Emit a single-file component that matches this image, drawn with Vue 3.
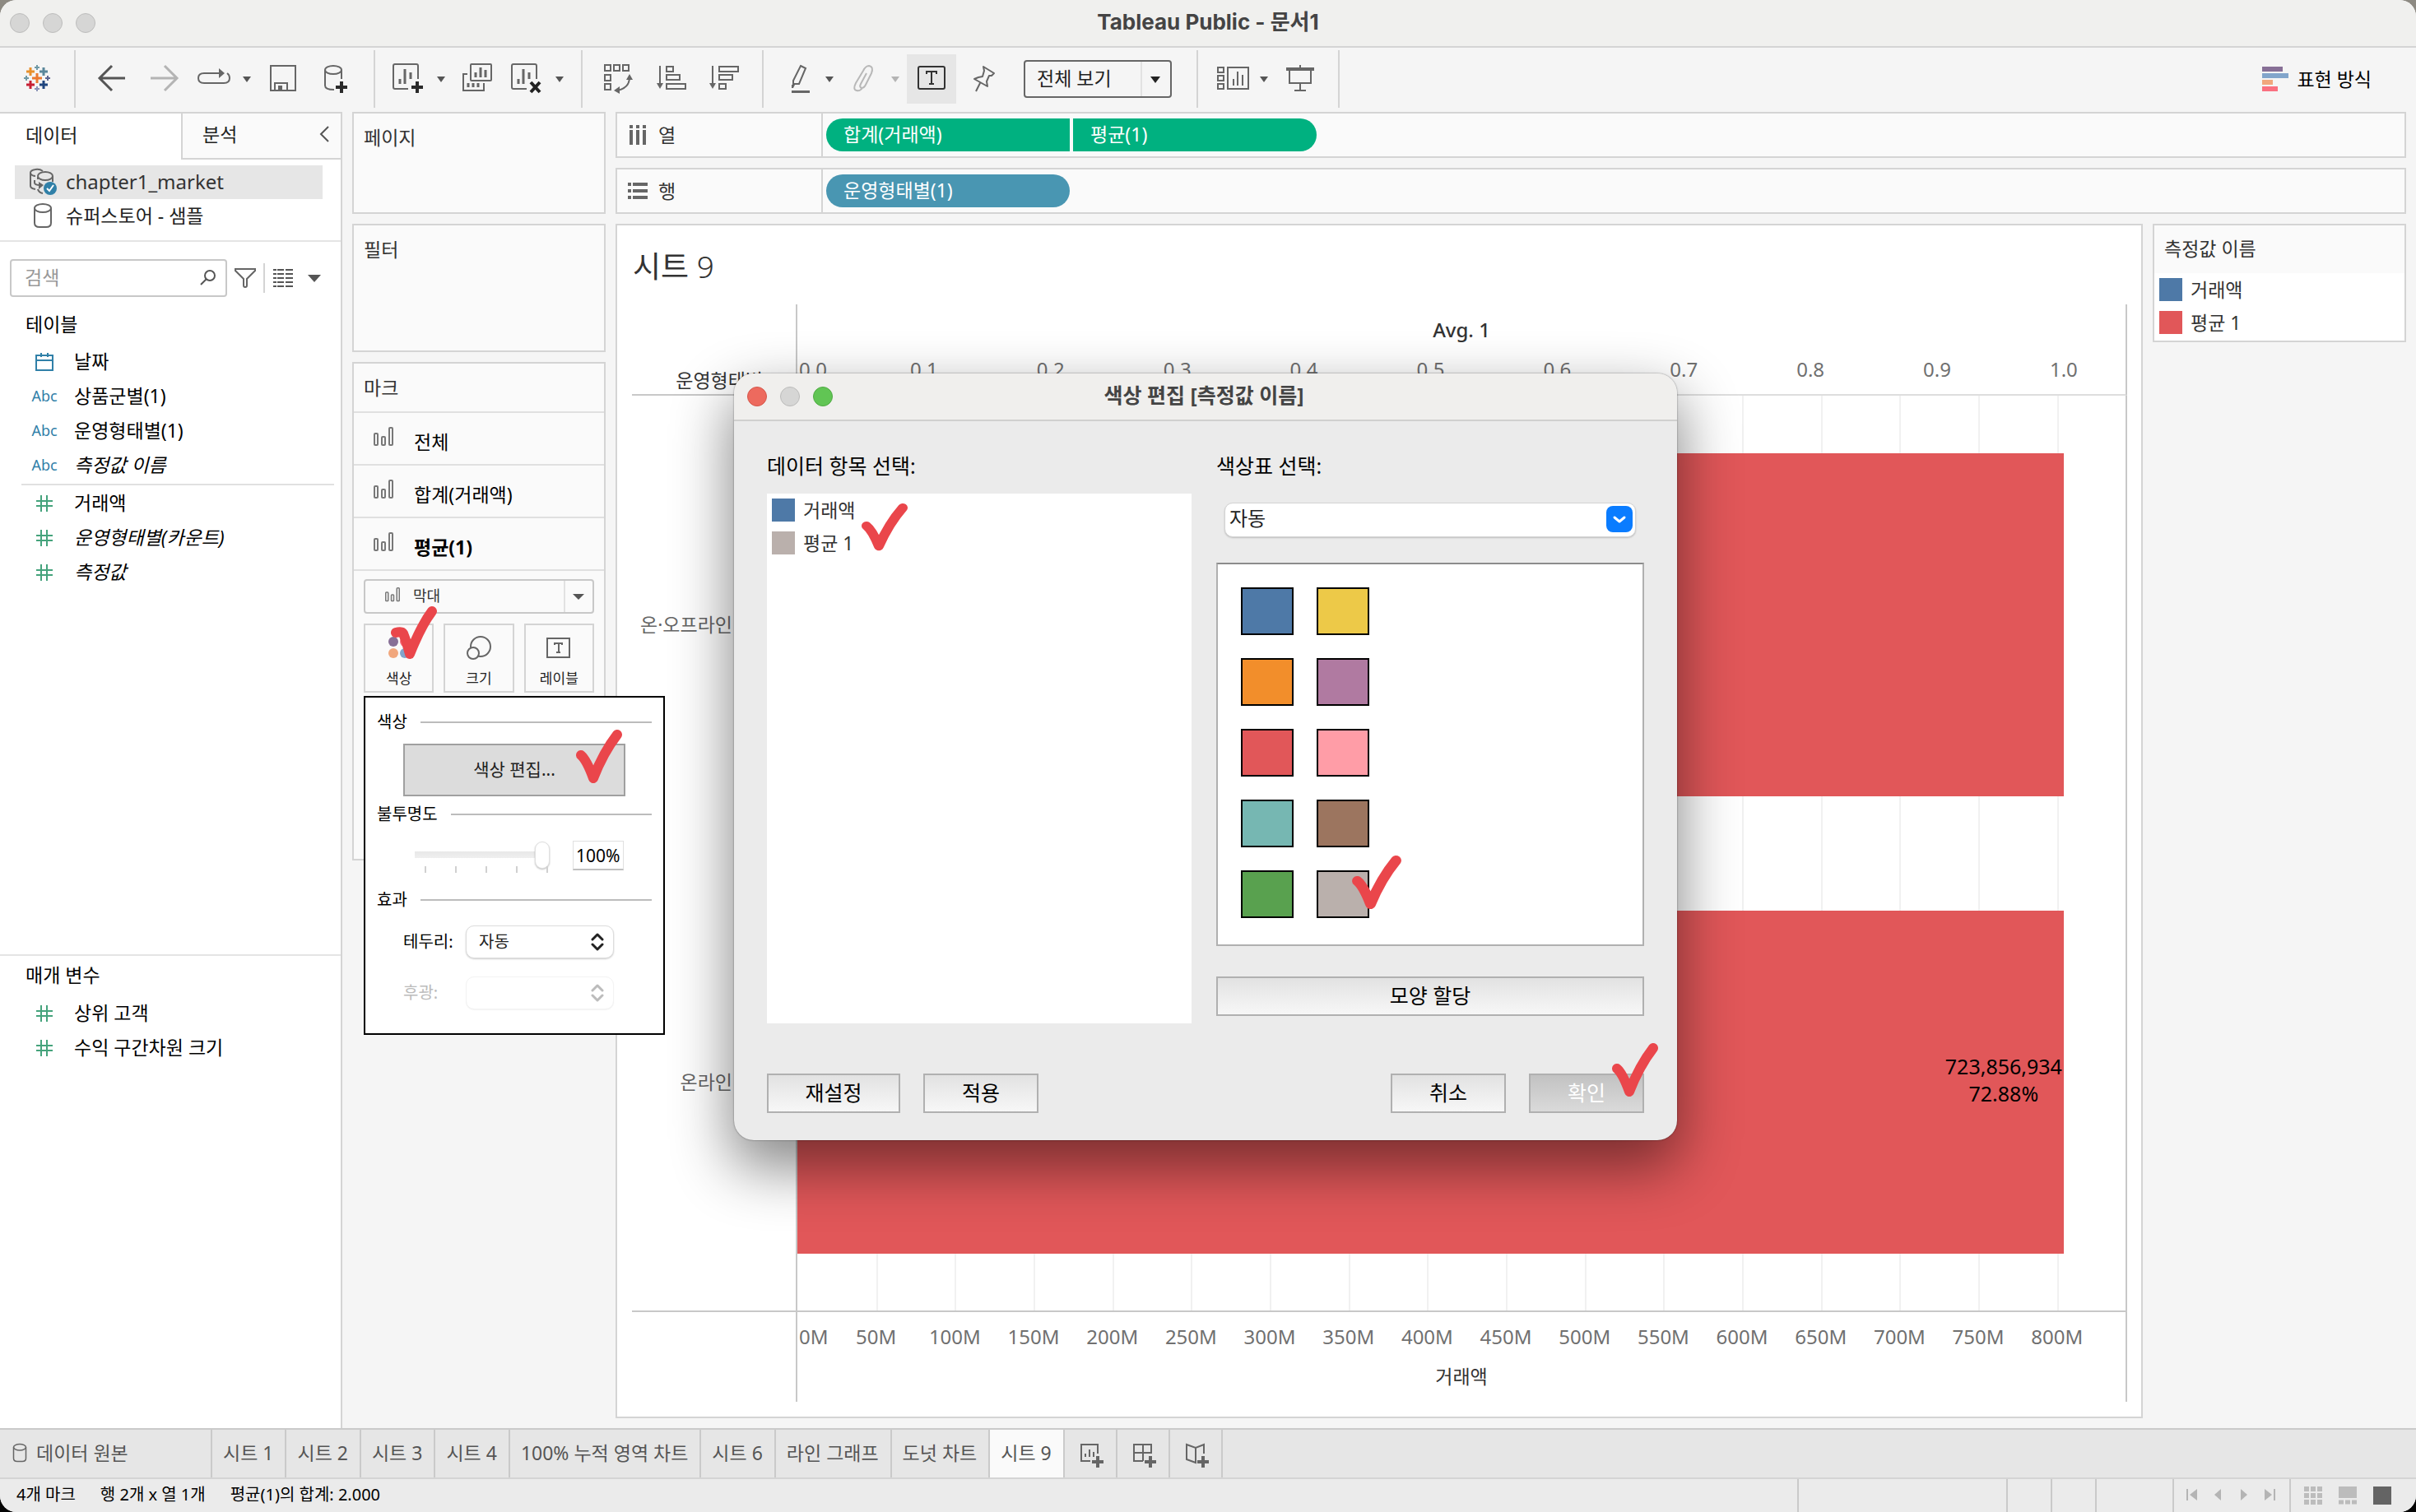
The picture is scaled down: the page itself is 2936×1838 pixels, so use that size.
<script setup>
import { ref } from 'vue'

const dimensions = [
  { icon: 'date', name: '날짜' },
  { icon: 'abc', name: '상품군별(1)' },
  { icon: 'abc', name: '운영형태별(1)' },
  { icon: 'abc', name: '측정값 이름', auto: true }
]
const measures = [
  { name: '거래액' },
  { name: '운영형태별(카운트)', auto: true },
  { name: '측정값', auto: true }
]
const parameters = ['상위 고객', '수익 구간차원 크기']

const markLayers = [
  { name: '전체' },
  { name: '합계(거래액)' },
  { name: '평균(1)', active: true }
]

const avgMax = 1.0488
const salesMax = 843.5
const avgTicks = Array.from({ length: 10 }, (_, i) => (i + 1) / 10)
const salesTicks = Array.from({ length: 16 }, (_, i) => (i + 1) * 50)
const avgPos = (v) => ({ left: (v / avgMax) * 100 + '%' })
const salesPos = (v) => ({ left: (v / salesMax) * 100 + '%' })
const panes = [
  { name: '온·오프라인', value: 1 },
  { name: '온라인', value: 1, labels: ['723,856,934', '72.88%'] }
]

const palette = [
  '#4e79a7', '#edc948', '#f28e2b', '#b07aa1', '#e15759',
  '#ff9da7', '#76b7b2', '#9c755f', '#59a14f', '#bab0ac'
]
const sheets = ['시트 1', '시트 2', '시트 3', '시트 4', '100% 누적 영역 차트', '시트 6', '라인 그래프', '도넛 차트', '시트 9']
const activeSheet = ref('시트 9')
const search = ref('')
const opacity = ref(100)
</script>

<template>
  <div class="window">
    <svg class="defs" aria-hidden="true">
      <symbol id="check" viewBox="0 0 58 68" preserveAspectRatio="none">
        <path d="M7 32Q14 38 22 60Q34 29 51 7" fill="none" stroke="#ea464b" stroke-width="12" stroke-linecap="round" stroke-linejoin="round" />
      </symbol>
      <symbol id="check-wide" viewBox="0 0 58 68">
        <path d="M7 33Q14 31 16 34Q20 44 24 59Q38 24 51 7" fill="none" stroke="#ea464b" stroke-width="12" stroke-linecap="round" stroke-linejoin="round" />
      </symbol>
      <symbol id="bars" viewBox="0 0 24 24">
        <g fill="none" stroke="#787878" stroke-width="2">
          <rect x="1" y="8" width="4" height="14" rx="1" /><rect x="10" y="12" width="4" height="10" rx="1" /><rect x="19" y="1" width="4" height="21" rx="1" />
        </g>
      </symbol>
      <symbol id="hash" viewBox="0 0 24 24">
        <path d="M8 2V22M15 2V22M2 9H22M2 15H22" stroke="#45a37c" stroke-width="2" fill="none" />
      </symbol>
      <symbol id="cylinder" viewBox="0 0 24 32">
        <g fill="none" stroke="#666" stroke-width="2"><ellipse cx="12" cy="7" rx="10" ry="5" /><path d="M2 7V25Q2 30 8 30H16Q22 30 22 25V7" /></g>
      </symbol>
      <symbol id="spin" viewBox="0 0 16 24">
        <path d="M2 9L8 3L14 9M2 15L8 21L14 15" fill="none" stroke="currentColor" stroke-width="3" stroke-linecap="round" stroke-linejoin="round" />
      </symbol>
      <symbol id="sheet" viewBox="0 0 40 40">
        <path d="M32 20V4Q32 2 30 2H4Q2 2 2 4V30Q2 32 4 32H20" fill="none" stroke="#666" stroke-width="2" />
        <path d="M10 20V26M16 8V26M23 12V20" stroke="#666" stroke-width="3" />
      </symbol>
    </svg>

    <header class="titlebar">
      <div class="lights"><i></i><i></i><i></i></div>
      <h1>Tableau Public - 문서1</h1>
    </header>

    <nav class="toolbar" aria-label="도구 모음">
      <div class="group logo">
        <button class="ic" aria-label="시작 페이지">
          <svg viewBox="0 0 40 40" fill="none" stroke-width="2">
            <path d="M20 13V25M14 19H26" stroke="#eb7a30" stroke-width="3" />
            <path d="M12 6V16M7 11H17" stroke="#e8912d" stroke-width="3" /><path d="M28 6V16M23 11H33" stroke="#5b879b" stroke-width="3" />
            <path d="M12 22V32M7 27H17" stroke="#c72035" stroke-width="3" /><path d="M28 22V32M23 27H33" stroke="#1f457e" stroke-width="3" />
            <path d="M20 3V9M17 6H23M7 16V22M4 19H10" stroke="#7099a6" /><path d="M33 16V22M30 19H36" stroke="#5b6591" /><path d="M20 29V35M17 32H23" stroke="#8b93b8" />
          </svg>
        </button>
      </div>
      <div class="group">
        <button class="ic" aria-label="실행 취소"><svg viewBox="0 0 40 40"><path d="M36 19H5M20 4L5 19L20 34" fill="none" stroke="#555" stroke-width="3" /></svg></button>
        <button class="ic" aria-label="다시 실행"><svg viewBox="0 0 40 40"><path d="M3 19H35M20 4L35 19L20 34" fill="none" stroke="#b4b4b4" stroke-width="3" /></svg></button>
        <button class="ic split" aria-label="다시 재생"><svg viewBox="0 0 40 40"><path d="M30 13H8Q1 13 1 19Q1 25 8 25H32Q39 25 39 19Q39 15 36 13" fill="none" stroke="#666" stroke-width="2" /><path d="M26 7L33 13L26 19Z" fill="#666" /></svg></button>
        <button class="caret" aria-label="재생 옵션"></button>
        <button class="ic" aria-label="저장"><svg viewBox="0 0 40 40"><path d="M5 4H35V34H5ZM10 34V25H25V34" fill="none" stroke="#666" stroke-width="2" /><path d="M14 28H19V34H14Z" fill="#666" /></svg></button>
        <button class="ic" aria-label="새 데이터 원본"><svg viewBox="0 0 40 40"><g fill="none" stroke="#666" stroke-width="2"><ellipse cx="17" cy="9" rx="10" ry="5" /><path d="M27 9V20M7 9V28Q7 33 18 33" /></g><path d="M27 23V37M20 30H34" stroke="#2a2a2a" stroke-width="4" /></svg></button>
      </div>
      <div class="group">
        <button class="ic split" aria-label="새 워크시트"><svg viewBox="0 0 40 40"><use href="#sheet" /><path d="M31 23V37M24 30H38" stroke="#2a2a2a" stroke-width="4" /></svg></button>
        <button class="caret" aria-label="새 워크시트 옵션"></button>
        <button class="ic" aria-label="복제"><svg viewBox="0 0 40 40"><g fill="none" stroke="#666" stroke-width="2"><rect x="12" y="2" width="25" height="20" rx="1" /><path d="M8 14H3V34H28V25" /></g><path d="M18 12V18M24 6V18M30 9V18M9 25V30M15 25V30M21 25V30" stroke="#666" stroke-width="3" /></svg></button>
        <button class="ic split" aria-label="지우기"><svg viewBox="0 0 40 40"><use href="#sheet" /><path d="M25 24L36 36M36 24L25 36" stroke="#222" stroke-width="4" /></svg></button>
        <button class="caret" aria-label="지우기 옵션"></button>
      </div>
      <div class="group">
        <button class="ic" aria-label="행과 열 바꾸기"><svg viewBox="0 0 40 40"><g fill="none" stroke="#666" stroke-width="2"><path d="M3 3H10V10H3ZM14 3H21V10H14ZM25 3H32V10H25ZM3 15H10V22H3ZM3 26H10V33H3Z" /><path d="M33 18Q33 31 18 34" /></g><path d="M29 21L33 14L37 21ZM21 29L14 34L21 38Z" fill="#666" /></svg></button>
        <button class="ic" aria-label="오름차순 정렬"><svg viewBox="0 0 40 40"><g fill="none" stroke="#666" stroke-width="2"><path d="M6 4V28M14 5H22V11H14ZM14 15H30V21H14ZM14 26H37V32H14Z" /></g><path d="M2 25H10L6 32Z" fill="#666" /></svg></button>
        <button class="ic" aria-label="내림차순 정렬"><svg viewBox="0 0 40 40"><g fill="none" stroke="#666" stroke-width="2"><path d="M6 4V28M14 5H37V11H14ZM14 15H30V21H14ZM14 26H22V32H14Z" /></g><path d="M2 25H10L6 32Z" fill="#666" /></svg></button>
      </div>
      <div class="group">
        <button class="ic split" aria-label="강조 표시"><svg viewBox="0 0 40 40"><path d="M25 4L31 7L23 26H16V22Z" fill="none" stroke="#666" stroke-width="2" /><path d="M14 27H18L16 31H14ZM14 34H36V37H14Z" fill="#666" /></svg></button>
        <button class="caret" aria-label="강조 표시 옵션"></button>
        <button class="ic split" aria-label="그룹 멤버"><svg viewBox="0 0 40 40"><path d="M25 13L18 26Q16 30 19 31Q22 31 24 27L31 13Q34 5 28 4Q24 4 21 10L12 25Q8 33 13 34Q17 35 20 31" fill="none" stroke="#b8b8b8" stroke-width="2" /></svg></button>
        <button class="caret dim" aria-label="그룹 옵션"></button>
        <button class="ic pressed" aria-label="마크 레이블 표시"><svg viewBox="0 0 40 40"><rect x="4" y="5" width="32" height="27" rx="2" fill="none" stroke="#333" stroke-width="2" /><path d="M14 14V11H26V14M20 11V26M17 26H23" fill="none" stroke="#333" stroke-width="2" /></svg></button>
        <button class="ic" aria-label="축 고정"><svg viewBox="0 0 40 40"><path d="M19 5L32 13L29 16L26 16L23 23L24 29L8 20L13 18L18 17L20 10ZM15 25L10 35" fill="none" stroke="#666" stroke-width="2" stroke-linejoin="round" /></svg></button>
        <label class="fit">
          <select aria-label="맞춤"><option>전체 보기</option></select>
        </label>
      </div>
      <div class="group">
        <button class="ic split" aria-label="카드 표시"><svg viewBox="0 0 40 40"><g fill="none" stroke="#666" stroke-width="2"><path d="M4 6H11V12H4ZM4 16H11V22H4ZM4 26H11V32H4ZM16 6H41V32H16Z" /></g><path d="M23 20V28M28 11V28M34 15V28" stroke="#666" stroke-width="2" /></svg></button>
        <button class="caret" aria-label="카드 옵션"></button>
        <button class="ic" aria-label="프레젠테이션 모드"><svg viewBox="0 0 40 40"><path d="M3 6H37V10H3ZM19 3H21V6H19Z" fill="#666" /><path d="M7 10V25H33V10M20 25V34M13 34H27" fill="none" stroke="#666" stroke-width="2" /></svg></button>
      </div>
      <button class="showme">
        <svg viewBox="0 0 32 30"><path d="M0 0H25V6H0Z" fill="#876f96" /><path d="M0 8H32V14H0Z" fill="#82a5cb" /><path d="M0 16H13V22H0Z" fill="#f1a77d" /><path d="M0 24H19V30H0Z" fill="#fa7080" /></svg>
        표현 방식
      </button>
    </nav>

    <main class="workspace">
      <aside class="data-pane">
        <div class="pane-tabs">
          <button class="on">데이터</button>
          <button>분석
            <svg viewBox="0 0 12 20"><path d="M11 1L2 10L11 19" fill="none" stroke="#555" stroke-width="2" /></svg>
          </button>
        </div>
        <ul class="sources">
          <li class="selected">
            <svg class="linked" viewBox="0 0 34 34">
              <g fill="none" stroke="#666" stroke-width="2"><path d="M17 4Q13 1 8 2Q2 3 2 6V22Q2 25 8 26M2 7Q4 10 8 10" /><ellipse cx="20" cy="10" rx="9" ry="5" /><path d="M29 10V17M11 11V14M7 15V18Q7 21 14 21M11 26Q12 30 17 31" /></g>
              <path d="M12 17L18 21L12 26Z" fill="#666" /><circle cx="26" cy="25" r="8" fill="#3080a8" /><path d="M22 25L25 28L30 21" fill="none" stroke="#fff" stroke-width="2" />
            </svg>
            chapter1_market
          </li>
          <li><svg class="cyl" aria-hidden="true"><use href="#cylinder" /></svg>슈퍼스토어 - 샘플</li>
        </ul>
        <div class="search-row">
          <label class="search">
            <input v-model="search" type="text" placeholder="검색" aria-label="검색" />
            <svg viewBox="0 0 20 20"><circle cx="12" cy="8" r="6" fill="none" stroke="#555" stroke-width="2" /><path d="M8 12L1 19" stroke="#555" stroke-width="2" /></svg>
          </label>
          <button class="mini" aria-label="필터"><svg viewBox="0 0 28 26"><path d="M2 2H26V4L16 14V22Q16 24 14 24Q12 24 12 22V14L2 4Z" fill="none" stroke="#666" stroke-width="2" /></svg></button>
          <span class="bar"></span>
          <button class="mini" aria-label="보기"><svg viewBox="0 0 28 26"><path d="M2 3H26M2 8H26M2 13H26M2 18H26M2 23H26" stroke="#555" stroke-width="2" stroke-dasharray="4 1 8 2 9" /></svg></button>
          <button class="caret wide" aria-label="보기 옵션"></button>
        </div>
        <section class="fields">
          <h2>테이블</h2>
          <ul>
            <li v-for="f in dimensions" :key="f.name">
              <span class="type">
                <svg v-if="f.icon === 'date'" viewBox="0 0 24 24"><path d="M2 4H22V22H2ZM2 10H22M8 1V6M16 1V6" fill="none" stroke="#3080a8" stroke-width="2" /></svg>
                <template v-else>Abc</template>
              </span>
              <span :class="{ auto: f.auto }">{{ f.name }}</span>
            </li>
          </ul>
          <ul class="measures">
            <li v-for="f in measures" :key="f.name">
              <span class="type"><svg><use href="#hash" /></svg></span>
              <span :class="{ auto: f.auto }">{{ f.name }}</span>
            </li>
          </ul>
        </section>
        <section class="params">
          <h2>매개 변수</h2>
          <ul>
            <li v-for="p in parameters" :key="p"><span class="type"><svg><use href="#hash" /></svg></span>{{ p }}</li>
          </ul>
        </section>
      </aside>

      <div class="cards">
        <section class="card pages"><h2>페이지</h2></section>
        <section class="card filters"><h2>필터</h2></section>
        <section class="card marks">
          <h2>마크</h2>
          <button v-for="m in markLayers" :key="m.name" class="layer" :class="{ active: m.active }">
            <svg aria-hidden="true"><use href="#bars" /></svg>{{ m.name }}
          </button>
          <div class="mark-body">
            <label class="mark-type">
              <svg aria-hidden="true"><use href="#bars" /></svg>
              <select aria-label="마크 유형"><option>막대</option></select>
            </label>
            <div class="mark-buttons">
              <button>
                <svg viewBox="0 0 40 32"><circle cx="13" cy="8" r="6" fill="#876f96" /><circle cx="27" cy="8" r="6" fill="#fa7080" /><circle cx="13" cy="22" r="6" fill="#f1a77d" /><circle cx="27" cy="22" r="6" fill="#82a5cb" /></svg>
                색상
                <svg class="tick on-color"><use href="#check-wide" /></svg>
              </button>
              <button>
                <svg viewBox="0 0 40 32"><g fill="#fafafa" stroke="#666" stroke-width="2"><circle cx="22" cy="14" r="12" /><circle cx="13" cy="22" r="7" /></g></svg>
                크기
              </button>
              <button>
                <svg viewBox="0 0 40 32"><path d="M6 4H33V27H6Z" fill="none" stroke="#666" stroke-width="2" /><path d="M15 12V10H24V12M20 10V21M17 21H22" fill="none" stroke="#666" stroke-width="2" /></svg>
                레이블
              </button>
            </div>
          </div>

          <div class="popup">
            <h3>색상</h3>
            <button class="edit">색상 편집...<svg class="tick on-edit"><use href="#check" /></svg></button>
            <h3 id="op">불투명도</h3>
            <div class="opacity">
              <div class="slide">
                <input v-model="opacity" type="range" min="0" max="100" aria-labelledby="op" />
                <div class="stops"><i v-for="n in 5" :key="n"></i></div>
              </div>
              <input class="pct" type="text" :value="opacity + '%'" aria-labelledby="op" />
            </div>
            <h3>효과</h3>
            <div class="effect">
              <label for="border">테두리:</label>
              <span class="mac"><select id="border"><option>자동</option></select><svg><use href="#spin" /></svg></span>
            </div>
            <div class="effect off">
              <label for="halo">후광:</label>
              <span class="mac"><select id="halo" disabled></select><svg><use href="#spin" /></svg></span>
            </div>
          </div>
        </section>
      </div>

      <div class="stage">
        <div class="shelf">
          <div class="shelf-name"><svg viewBox="0 0 26 26"><path d="M5 1V5M13 1V5M21 1V5M5 7V25M13 7V25M21 7V25" stroke="#666" stroke-width="4" /></svg>열</div>
          <button class="pill green first">합계(거래액)</button>
          <button class="pill green last">평균(1)</button>
        </div>
        <div class="shelf">
          <div class="shelf-name"><svg viewBox="0 0 26 26"><path d="M1 5H5M1 13H5M1 21H5M7 5H25M7 13H25M7 21H25" stroke="#666" stroke-width="4" /></svg>행</div>
          <button class="pill blue">운영형태별(1)</button>
        </div>
        <div class="view-row">
          <section class="view">
            <h2><b>시트</b> 9</h2>
            <div class="chart">
              <div class="corner">운영형태별(1)</div>
              <div class="axis top">
                <div class="axis-title">Avg. 1</div>
                <div class="ticks">
                  <span class="zero">0.0</span>
                  <span v-for="t in avgTicks" :key="t" class="tk" :style="avgPos(t)">{{ t.toFixed(1) }}</span>
                </div>
              </div>
              <div class="rows">
                <div v-for="p in panes" :key="p.name">{{ p.name }}</div>
              </div>
              <div class="plot">
                <i v-for="t in salesTicks" :key="t" class="gridline" :style="salesPos(t)"></i>
                <div v-for="p in panes" :key="p.name" class="pane">
                  <div class="barmark" :style="{ width: (p.value / avgMax) * 100 + '%' }">
                    <div v-if="p.labels" class="mark-label"><div v-for="l in p.labels" :key="l">{{ l }}</div></div>
                  </div>
                </div>
              </div>
              <div class="corner-bottom"></div>
              <div class="axis bottom">
                <div class="ticks">
                  <span class="zero">0M</span>
                  <span v-for="t in salesTicks" :key="t" class="tk" :style="salesPos(t)">{{ t }}M</span>
                </div>
                <div class="axis-title">거래액</div>
              </div>
            </div>
          </section>
          <section class="legend">
            <h2>측정값 이름</h2>
            <ul class="keys">
              <li><i class="sw blue-sw"></i>거래액</li>
              <li><i class="sw red-sw"></i>평균 1</li>
            </ul>
          </section>
        </div>
      </div>
    </main>

    <footer class="tabs">
      <button class="source-tab"><svg aria-hidden="true"><use href="#cylinder" /></svg>데이터 원본</button>
      <button v-for="s in sheets" :key="s" :class="{ current: s === activeSheet }" @click="activeSheet = s">{{ s }}</button>
      <button class="add" aria-label="새 워크시트"><svg viewBox="0 0 32 32"><path d="M23 14V3H3V23H14" fill="none" stroke="#666" stroke-width="2" /><path d="M8 14V18M13 9V18M18 12V18" stroke="#666" stroke-width="2" /><path d="M23 17V31M16 24H30" stroke="#666" stroke-width="4" /></svg></button>
      <button class="add" aria-label="새 대시보드"><svg viewBox="0 0 32 32"><path d="M24 14V3H3V23H14M3 13H24M14 3V23" fill="none" stroke="#666" stroke-width="2" /><path d="M23 17V31M16 24H30" stroke="#666" stroke-width="4" /></svg></button>
      <button class="add" aria-label="새 스토리"><svg viewBox="0 0 32 32"><path d="M24 14V3L14 7L3 3V21L14 25V7" fill="none" stroke="#666" stroke-width="2" /><path d="M23 17V31M16 24H30" stroke="#666" stroke-width="4" /></svg></button>
    </footer>

    <div class="status">
      <span>4개 마크</span><span>행 2개 x 열 1개</span><span>평균(1)의 합계: 2.000</span>
      <div class="cells">
        <i class="c1"></i><i class="c2"></i><i class="c2"></i><i class="c3"></i>
        <div class="nav">
          <button aria-label="처음"><svg viewBox="0 0 16 16"><path d="M2 1V15" stroke="#b4b4b4" stroke-width="2" /><path d="M14 1V15L5 8Z" fill="#b4b4b4" /></svg></button>
          <button aria-label="이전"><svg viewBox="0 0 16 16"><path d="M12 1V15L4 8Z" fill="#b4b4b4" /></svg></button>
          <button aria-label="다음"><svg viewBox="0 0 16 16"><path d="M4 1V15L12 8Z" fill="#b4b4b4" /></svg></button>
          <button aria-label="마지막"><svg viewBox="0 0 16 16"><path d="M14 1V15" stroke="#b4b4b4" stroke-width="2" /><path d="M2 1V15L11 8Z" fill="#b4b4b4" /></svg></button>
        </div>
        <div class="modes">
          <button aria-label="시트 정렬기"><svg viewBox="0 0 22 22"><path d="M0 3H6M8 3H14M16 3H22M0 11H6M8 11H14M16 11H22M0 19H6M8 19H14M16 19H22" stroke="#bcbcbc" stroke-width="6" /></svg></button>
          <button aria-label="필름 스트립"><svg viewBox="0 0 22 22"><path d="M0 0H22V14H0Z" fill="#bcbcbc" /><path d="M0 19H6M8 19H14M16 19H22" stroke="#bcbcbc" stroke-width="5" /></svg></button>
          <button aria-label="탭 표시"><svg viewBox="0 0 22 22"><path d="M0 0H22V22H0Z" fill="#646464" /></svg></button>
        </div>
      </div>
    </div>

    <div class="dialog" role="dialog" aria-labelledby="dlg-title">
      <header>
        <div class="lights"><i class="red"></i><i></i><i class="grn"></i></div>
        <h2 id="dlg-title">색상 편집 [측정값 이름]</h2>
      </header>
      <div class="dlg-body">
        <div class="col items">
          <h3>데이터 항목 선택:</h3>
          <ul class="keys list">
            <li><i class="sw blue-sw"></i>거래액</li>
            <li><i class="sw grey-sw"></i>평균 1<svg class="tick on-item"><use href="#check" /></svg></li>
          </ul>
        </div>
        <div class="col swatches">
          <label class="h3" for="palette">색상표 선택:</label>
          <span class="combo">
            <select id="palette"><option>자동</option></select>
            <svg viewBox="0 0 32 32"><rect width="32" height="32" rx="8" fill="#0a7cff" /><path d="M10 14L16 19L22 14" fill="none" stroke="#fff" stroke-width="3" stroke-linecap="round" stroke-linejoin="round" /></svg>
          </span>
          <div class="palette">
            <button v-for="c in palette" :key="c" :aria-label="c" :style="{ background: c }"></button>
            <svg class="tick on-swatch"><use href="#check" /></svg>
          </div>
          <button class="btn assign">모양 할당</button>
        </div>
      </div>
      <div class="actions">
        <button class="btn reset">재설정</button>
        <button class="btn">적용</button>
        <button class="btn cancel">취소</button>
        <button class="btn ok">확인<svg class="tick on-ok"><use href="#check" /></svg></button>
      </div>
    </div>
  </div>
</template>

<style>
html, body { margin: 0; background: linear-gradient(#8d8a82, #050505 60%); }
</style>

<style scoped>
* { box-sizing: border-box; }
.window {
  position: relative; display: flex; flex-direction: column; min-height: 100vh; overflow: hidden;
  border-radius: 20px; background: #f5f5f5; color: #333;
  font: 23px/30px "Noto Sans", "Noto Sans CJK KR", sans-serif;
}
.defs { position: absolute; width: 0; height: 0; }
button { font: inherit; color: inherit; background: none; border: 0; padding: 0; margin: 0; }
select, input { font: inherit; color: inherit; margin: 0; }
select { appearance: none; }
h1, h2, h3, ul { margin: 0; padding: 0; font: inherit; list-style: none; }
svg { flex: none; display: block; }

.titlebar { position: relative; display: flex; align-items: center; justify-content: center; height: 58px; background: #f0f0ee; border-bottom: 2px solid #d4d4d4; }
h1 { font: 700 26px/30px Inter, "Noto Sans CJK KR", sans-serif; color: #444; padding-bottom: 2px; }
.lights { position: absolute; left: 12px; top: 16px; display: flex; gap: 16px; }
.lights i { width: 24px; height: 24px; border-radius: 50%; background: #d6d6d5; border: 1px solid #bcbcbb; }
.lights .red { background: #ed6a5e; border-color: #d5574b; }
.lights .grn { background: #61c554; border-color: #50aa44; }

.toolbar { display: flex; align-items: center; height: 78px; padding-bottom: 2px; }
.group { display: flex; align-items: center; height: 70px; padding: 0 14px 0 12px; border-right: 2px solid #d4d4d4; }
.logo { padding: 0 13px; }
.ic { display: grid; place-items: center; width: 64px; height: 60px; }
.ic svg { width: 40px; height: 40px; overflow: visible; }
.split { width: 56px; }
.pressed { background: #e6e6e6; width: 60px; margin: 0 2px; }
.caret { width: 24px; height: 40px; display: grid; place-items: center; }
.caret::after { content: ""; border: 5px solid transparent; border-top: 7px solid #555; border-bottom: 0; }
.caret.dim::after { border-top-color: #b4b4b4; }
.caret.wide { margin-left: 4px; }
.caret.wide::after { border-width: 9px 8px 0; }
.fit { position: relative; margin: 0 16px; }
.fit select { display: block; width: 180px; height: 46px; padding: 0 0 2px 14px; border: 2px solid #666; border-radius: 4px; background: #f5f5f5; color: #222; }
.fit::after { content: ""; position: absolute; right: 14px; top: 20px; border: 6px solid transparent; border-top: 8px solid #222; border-bottom: 0; }
.fit::before { content: ""; position: absolute; right: 36px; top: 2px; width: 2px; height: 42px; background: #e2e2e2; }
.showme { display: flex; align-items: center; gap: 10px; margin-left: auto; padding-right: 54px; color: #000; }
.showme svg { width: 32px; height: 30px; }

.workspace { flex: 1; display: flex; align-items: stretch; }
.data-pane { display: flex; flex-direction: column; width: 416px; background: #fff; border-top: 2px solid #d4d4d4; border-right: 2px solid #d4d4d4; }
.pane-tabs { display: flex; color: #222; }
.pane-tabs button { display: flex; align-items: center; justify-content: space-between; height: 56px; width: 220px; padding: 0 0 4px 31px; }
.pane-tabs button + button { flex: 1; padding: 0 14px 4px 24px; background: #fafafa; border-left: 2px solid #d4d4d4; border-bottom: 2px solid #d4d4d4; }
.pane-tabs svg { width: 12px; height: 22px; }
.sources { padding: 7px 22px 9px 18px; border-bottom: 2px solid #e4e4e4; }
.sources li { display: flex; align-items: center; height: 41px; gap: 12px; padding: 0 0 2px 17px; color: #222; }
.sources .selected { background: #e6e6e6; font-size: 24px; color: #333; gap: 11px; }
.linked { width: 34px; height: 34px; }
.cyl { width: 24px; height: 32px; margin: 0 4px 0 5px; }
.search-row { display: flex; align-items: center; padding: 21px 0 0 12px; }
.search { position: relative; }
.search input { display: block; width: 264px; height: 46px; padding: 0 40px 2px 16px; border: 2px solid #c8c8c8; border-radius: 4px; background: #fff; }
.search input::placeholder { color: #999; opacity: 1; }
.search svg { position: absolute; right: 13px; top: 12px; width: 20px; height: 20px; }
.mini { margin: 0 8px; }
.mini svg { width: 28px; height: 26px; }
.bar { width: 2px; height: 36px; background: #d4d4d4; }
.fields { flex: 1; padding: 14px 8px 0 26px; color: #000; }
.fields h2, .params h2 { padding-left: 5px; height: 42px; line-height: 38px; }
.fields li, .params li { display: flex; align-items: center; height: 42px; padding-bottom: 2px; }
.type { display: grid; place-items: center; width: 56px; margin-right: 8px; font-size: 18px; color: #3080a8; }
.type svg { width: 24px; height: 24px; margin-top: 2px; }
.fields > ul:first-of-type { padding-top: 2px; }
.measures { border-top: 2px solid #e0e0e0; padding-top: 1px; margin-top: 1px; }
.auto { font-style: italic; }
.params { height: 576px; padding: 4px 8px 0 26px; border-top: 2px solid #e4e4e4; color: #000; }
.params ul { padding-top: 3px; }

.cards { width: 308px; margin-left: 12px; display: flex; flex-direction: column; gap: 12px; }
.card { background: #fafafa; border: 2px solid #d4d4d4; }
.card > h2 { padding: 14px 12px; }
.pages { height: 124px; }
.filters { height: 156px; }
.marks { position: relative; height: 606px; }
.layer { display: flex; align-items: center; gap: 25px; width: 100%; height: 64px; padding: 8px 24px 0; border-top: 2px solid #e0e0e0; color: #000; }
.layer svg { width: 24px; height: 24px; margin-bottom: 12px; }
.active { font-weight: 700; }
.mark-body { border-top: 2px solid #e0e0e0; padding: 10px 12px; }
.mark-type { position: relative; display: block; }
.mark-type select { width: 100%; height: 42px; padding: 0 0 2px 58px; font-size: 18px; border: 2px solid #c8c8c8; border-radius: 4px; background: #fafafa; display: block; }
.mark-type svg { position: absolute; left: 26px; top: 10px; width: 18px; height: 18px; }
.mark-type::before { content: ""; position: absolute; right: 35px; top: 2px; width: 2px; height: 38px; background: #e2e2e2; }
.mark-type::after { content: ""; position: absolute; right: 12px; top: 18px; border: 7px solid transparent; border-top: 7px solid #555; border-bottom: 0; }
.mark-buttons { display: flex; gap: 12px; margin-top: 12px; }
.mark-buttons button { position: relative; flex: 1; height: 84px; border: 2px solid #d4d4d4; display: flex; flex-direction: column; align-items: center; justify-content: flex-end; font-size: 17px; line-height: 24px; color: #222; gap: 9px; padding-bottom: 3px; }
.mark-buttons svg { width: 40px; height: 32px; }

.tick, .mark-buttons .tick { position: absolute; width: 58px; height: 68px; z-index: 3; pointer-events: none; }
.mark-buttons .on-color { left: 30px; top: -24px; }
.on-edit { right: 1px; top: -20px; }
.on-item { left: 108px; top: -31px; }
.list .on-item { height: 60px; }
.on-swatch { left: 162px; top: 353px; }
.palette .on-swatch { width: 62px; }
.on-ok { right: -20px; top: -40px; }

.popup { position: absolute; z-index: 2; left: 12px; top: 404px; width: 366px; height: 412px; padding: 16px 14px 0; border: 2px solid #000; background: #fff; color: #000; font-size: 20px; line-height: 28px; }
.popup h3 { display: flex; align-items: center; gap: 16px; }
.popup h3::after { content: ""; flex: 1; height: 2px; background: #bcbcbc; }
.edit { position: relative; display: block; width: 270px; height: 64px; margin: 12px 32px 8px; padding-bottom: 2px; border: 2px solid #a0a0a0; background: #dcdcdc; color: #222; font-size: 21px; }
.opacity { display: flex; align-items: flex-start; margin: 18px 0 18px 46px; height: 40px; }
.slide { width: 164px; }
.slide input { appearance: none; display: block; width: 164px; height: 34px; background: linear-gradient(#e8e8e8, #efefef) center / 100% 8px no-repeat; border-radius: 4px; }
.slide input::-webkit-slider-thumb { appearance: none; width: 18px; height: 33px; border-radius: 9px; background: #fff; border: 1px solid #e0e0e0; box-shadow: 0 1px 2px #0004; }
.stops { display: flex; justify-content: space-between; padding: 0 2px 0 12px; margin-top: -3px; }
.stops i { width: 2px; height: 8px; background: #d0d0d0; }
.pct { width: 62px; height: 36px; margin-left: 28px; padding: 0 3px; font-size: 21px; border: 1px solid #e0e0e0; border-bottom: 2px solid #c0c0c0; background: #fff; }
.effect { display: flex; align-items: center; height: 62px; padding-left: 32px; }
.effect label { width: 76px; white-space: nowrap; }
.popup h3 + .effect { margin-top: 6px; }
.mac { position: relative; color: #222; }
.mac select { display: block; width: 180px; height: 40px; padding: 0 0 1px 15px; border: 1px solid #ddd; border-radius: 10px; background: #fff; box-shadow: 0 1px 2px #0003; }
.mac svg { position: absolute; right: 12px; top: 8px; width: 16px; height: 24px; }
.off, .off .mac { color: #bcbcbc; }
.off select { box-shadow: 0 1px 1px #0001; border-color: #eee; }

.stage { flex: 1; min-width: 0; display: flex; flex-direction: column; gap: 12px; margin: 0 12px 12px; }
.shelf { display: flex; align-items: center; height: 56px; background: #fafafa; border: 2px solid #d4d4d4; }
.shelf-name { display: flex; align-items: center; gap: 12px; width: 250px; height: 52px; padding-left: 12px; border-right: 2px solid #d4d4d4; margin-right: 4px; }
.shelf-name svg { width: 26px; height: 26px; }
.pill { width: 296px; height: 40px; padding: 0 0 3px 21px; text-align: left; color: #fff; border-radius: 20px; }
.green { background: #00b180; }
.blue { background: #4996b2; }
.first { border-radius: 20px 0 0 20px; margin-right: 4px; }
.last { border-radius: 0 20px 20px 0; }
.view-row { flex: 1; display: flex; gap: 12px; align-items: flex-start; }
.view { flex: 1; align-self: stretch; display: flex; flex-direction: column; padding: 24px 17px 18px 18px; background: #fff; border: 2px solid #d4d4d4; }
.view h2 { font-size: 37px; line-height: 52px; height: 72px; padding-left: 1px; font-weight: 300; }
.view b { font-weight: 400; }
.legend { width: 308px; border: 2px solid #d4d4d4; background: #fff; }
.legend h2 { height: 58px; line-height: 56px; padding-left: 12px; background: #fafafa; }
.keys { padding: 2px 6px; }
.keys li { display: flex; align-items: center; gap: 10px; height: 40px; padding-bottom: 2px; }
.legend .keys { padding-bottom: 0; }
.legend .keys li, .list li { padding-bottom: 4px; }
.list li { margin-top: 0; }
.sw { width: 28px; height: 28px; }
.blue-sw { background: #4e79a7; }
.red-sw { background: #e15759; }
.grey-sw { background: #bab0ac; }

.chart { flex: 1; display: grid; grid-template-columns: 199px 1fr; grid-template-rows: 111px 1fr 111px; }
.corner { display: flex; align-items: flex-end; justify-content: flex-end; padding: 0 13px 2px 0; border-bottom: 2px solid #c8c8c8; }
.axis { border-left: 2px solid #c8c8c8; border-right: 2px solid #c8c8c8; }
.axis.top { border-bottom: 2px solid #dedede; padding-top: 16px; }
.axis-title { text-align: center; }
.top .axis-title { font-size: 24px; font-weight: 500; }
.ticks { position: relative; height: 36px; color: #707070; font-size: 24px; }
.top .ticks { margin-top: 18px; }
.bottom .ticks { margin: 15px 0 12px; }
.zero { position: absolute; left: 2px; }
.tk { position: absolute; display: flex; justify-content: center; width: 0; }
.rows { display: grid; grid-template-rows: 1fr 1fr; color: #666; }
.rows div { display: flex; align-items: center; justify-content: flex-end; padding-right: 77px; }
.plot { position: relative; display: grid; grid-template-rows: 1fr 1fr; border-left: 2px solid #c8c8c8; border-right: 2px solid #c8c8c8; }
.gridline { position: absolute; top: 0; bottom: 0; width: 2px; background: #f1f1f1; }
.pane { position: relative; display: flex; align-items: center; }
.barmark { display: flex; align-items: center; justify-content: flex-end; height: 75%; background: #e15759; }
.mark-label { text-align: center; color: #000; font-size: 25px; line-height: 33px; padding: 0 2px 4px 0; }
.corner-bottom { border-top: 2px solid #c8c8c8; }
.axis.bottom { border-top: 2px solid #c8c8c8; }

.tabs { display: flex; height: 62px; background: #e6e6e6; border-top: 2px solid #cacaca; border-bottom: 2px solid #d4d4d4; color: #555; }
.tabs button { flex: none; padding: 0 14px 2px 13px; border-right: 2px solid #cacaca; }
.tabs .source-tab { display: flex; align-items: center; gap: 11px; width: 258px; padding-left: 15px; }
.source-tab svg { width: 18px; height: 24px; }
.tabs .current { background: #fafafa; }
.tabs .add { width: 64px; padding: 4px 0 0 17px; }
.add svg { width: 32px; height: 32px; }

.status { display: flex; align-items: center; height: 40px; gap: 30px; padding: 0 0 2px 20px; background: #ebebeb; color: #000; font-size: 20px; }
.cells { display: flex; align-self: stretch; margin: 0 0 -2px auto; }
.cells > * { border-left: 2px solid #cacaca; display: flex; align-items: center; }
.c1 { width: 254px; }
.c2 { width: 54px; }
.c3 { width: 94px; }
.nav { width: 142px; justify-content: space-between; padding: 0 16px 2px 14px; }
.nav svg { width: 16px; height: 16px; }
.modes { width: 154px; gap: 20px; padding-left: 16px; }
.modes svg { width: 22px; height: 22px; }

.dialog { position: absolute; z-index: 5; left: 892px; top: 454px; width: 1146px; height: 932px; border-radius: 24px; background: #ebebeb; color: #000; font-size: 25px; line-height: 32px; box-shadow: 0 0 2px #0008, 0 30px 70px 4px #0007; }
.dialog header { position: relative; height: 58px; background: #f0efed; border-bottom: 2px solid #d0d0cf; border-radius: 24px 24px 0 0; text-align: center; }
.dialog .lights { left: 16px; top: 16px; }
.dialog header h2 { font-weight: 700; line-height: 52px; color: #444; font-size: 25px; padding-right: 4px; }
.dlg-body { display: flex; justify-content: space-between; padding: 38px 40px 0; }
.items { width: 516px; }
.swatches { width: 520px; }
.col h3, .h3 { display: block; height: 50px; }
.list { height: 644px; background: #fff; font-size: 23px; color: #333; }
.list li { position: relative; }
.combo { position: relative; display: block; margin: 11px 10px 0; }
.combo select { display: block; width: 100%; height: 42px; padding: 0 0 4px 5px; font-size: 24px; border: 1px solid #d4d4d4; border-radius: 10px; background: #fff; color: #222; box-shadow: 0 1px 2px #0003; }
.combo svg { position: absolute; right: 4px; top: 4px; width: 32px; height: 32px; }
.palette { position: relative; display: grid; grid-template-columns: 64px 64px; grid-auto-rows: 58px; gap: 28px; align-content: start; height: 466px; margin: 31px 0 37px; padding: 28px; background: #fff; border: 2px solid #b0b0b0; border-top-color: #8c8c8c; }
.palette button { border: 2px solid #000; }
.btn { position: relative; width: 140px; height: 48px; padding-bottom: 3px; border: 2px solid #b0b0b0; background: linear-gradient(#e2e2e2, #f7f7f7); }
.assign { display: block; width: 100%; }
.actions { display: flex; gap: 28px; padding: 61px 40px 0; }
.reset { width: 162px; }
.cancel { margin-left: auto; }
.ok { background: linear-gradient(#c2c2c2, #dadada); color: #fff; }
</style>
